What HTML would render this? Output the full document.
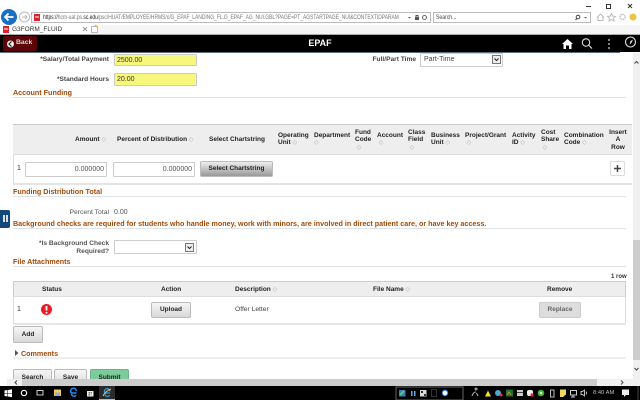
<!DOCTYPE html>
<html><head><meta charset="utf-8"><style>
html,body{margin:0;padding:0;background:#fff}
body{width:640px;height:400px;overflow:hidden;background:#fff;position:relative;font-family:"Liberation Sans",sans-serif;font-size:7px;color:#333;filter:blur(.25px)}
.a{position:absolute;white-space:nowrap;line-height:8px}
.b{font-weight:bold;font-size:6.6px}
.r{text-align:right}
.c{text-align:center}
.h{color:#a34a08;font-weight:bold;font-size:7.18px}
.l{position:absolute;height:1px;background:#e2e2e2;left:13px;width:613px}
.th{font-weight:bold;color:#222;line-height:7.4px;font-size:6.5px}
.s{color:#aaa;font-weight:normal;font-size:6px}
.btn{position:absolute;box-sizing:border-box;border:1px solid #bbb;border-radius:2px;background:linear-gradient(#f6f6f6,#d8d8d8);font-weight:bold;text-align:center;color:#222;font-size:6.5px}
.in{position:absolute;box-sizing:border-box;border:1px solid #ccc;border-radius:1px;background:#fff;line-height:11px}
svg{position:absolute;overflow:visible}
</style></head><body>

<!-- browser chrome -->
<div class="a" style="left:0;top:25px;width:640px;height:9px;background:#f5f5f5"></div>
<div class="a" style="left:0;top:34px;width:640px;height:1px;background:#aaa"></div>
<div class="a" style="left:0;top:25px;width:92px;height:9px;background:#fff"></div>
<svg style="left:0;top:0" width="640" height="35">
<circle cx="9" cy="17" r="8" fill="#1a6fc4"/>
<path d="M13.500 17H5.500M8.500 13.500L5 17l3.500 3.500" stroke="#fff" stroke-width="1.700" fill="none"/>
<circle cx="24.500" cy="17" r="5" fill="#fff" stroke="#bbb"/>
<path d="M22 17h5M25 15l2 2-2 2" stroke="#bbb" fill="none"/>
<rect x="31.500" y="12.500" width="399" height="10" fill="#fff" stroke="#bbb"/>
<rect x="34" y="14" width="6" height="7" fill="#d8232a"/>
<rect x="35" y="16.500" width="4" height="1" fill="#fff"/>
<rect x="433.500" y="12.500" width="157" height="10" fill="#fff" stroke="#bbb"/>
<rect x="3" y="26" width="6" height="7" fill="#d8232a"/>
<rect x="4" y="28.500" width="4" height="1" fill="#fff"/>
<path d="M83 27l4 4M87 27l-4 4" stroke="#999"/>
<rect x="91.500" y="26.500" width="6" height="6" fill="#fff" stroke="#bbb"/>
<path d="M95 25l2 2" stroke="#e8a33a"/>
<path d="M586 6.500h5" stroke="#333"/>
<rect x="606.500" y="4.500" width="4" height="4" fill="none" stroke="#333"/>
<path d="M628 4l4 4M632 4l-4 4" stroke="#333"/>
<rect x="415" y="17" width="4" height="3" fill="#555"/><path d="M416 17v-1.500h2V17" stroke="#555" fill="none"/>
<circle cx="424.500" cy="17.500" r="2" fill="none" stroke="#666"/>
<path d="M408 17h3l-1.500 1.500z" fill="#555"/>
<circle cx="578" cy="17" r="1.800" fill="none" stroke="#444"/><path d="M577 18.500l-1.500 1.500" stroke="#444"/>
<path d="M584 17h3l-1.500 1.500z" fill="#555"/>
<path d="M597 17.500l3.500-3.500 3.500 3.500M598 17v3.500h5V17" stroke="#bbb" fill="none"/>
<path d="M611.500 13.500l1.200 2.600 2.800.3-2 1.900.5 2.700-2.500-1.400-2.500 1.400.5-2.700-2-1.900 2.800-.3z" stroke="#bbb" fill="none"/>
<circle cx="622.500" cy="17" r="2.600" fill="none" stroke="#bbb" stroke-width="1.400" stroke-dasharray="1.300 .7"/>
<circle cx="633" cy="17" r="3.500" fill="#edc43e"/>
</svg>
<div class="a" style="left:43px;top:14px;font-size:6.5px;color:#777;transform:scaleX(.755);transform-origin:0 0"><span style="color:#222">https://</span>hcm-uat.ps.<span style="color:#222">sc.edu</span>/psc/HUAT/EMPLOYEE/HRMS/c/G_EPAF_LANDING_FL.G_EPAF_AG_NUI.GBL?PAGE=PT_AGSTARTPAGE_NUI&amp;CONTEXTIDPARAM</div>
<div class="a" style="left:436px;top:14px;font-size:6.5px;color:#444;transform:scaleX(.78);transform-origin:0 0">Search...</div>
<div class="a" style="left:12px;top:26px;font-size:6.5px;color:#333">G3FORM_FLUID</div>

<!-- nav bar -->
<div class="a" style="left:0;top:35px;width:640px;height:17px;background:#000"></div>
<div class="a" style="left:0;top:52px;width:620px;height:1px;background:#5b6f80"></div>
<div class="a" style="left:3px;top:36px;width:34px;height:15px;background:#5c0508;border-radius:2px"></div>
<div class="a" style="left:16px;top:39px;color:#ddd;font-size:6.8px;font-weight:bold">Back</div>
<svg style="left:0;top:35px" width="640" height="17">
<circle cx="10.500" cy="9" r="3.500" fill="#eee"/><path d="M11.500 6.500l-2.500 2.500 2.500 2.500" stroke="#222" stroke-width="1.200" fill="none"/>
<path d="M562 9l5.500-5 5.500 5h-1.500v5h-2.500v-3.500h-3v3.500h-2.500V9z" fill="#fff"/>
<circle cx="586" cy="7.500" r="3.700" fill="none" stroke="#ddd" stroke-width="1.100"/><path d="M589 10.500l3 3" stroke="#ddd" stroke-width="1.200"/>
<circle cx="609" cy="5" r=".9" fill="#ddd"/><circle cx="609" cy="9" r=".9" fill="#ddd"/><circle cx="609" cy="13" r=".9" fill="#ddd"/>
<circle cx="630.500" cy="7" r="5" fill="none" stroke="#ddd" stroke-width="1.100"/><path d="M633 4.500l-1.500 3.500-2 1.500 1-3.500z" fill="#ddd"/>
</svg>
<div class="a c" style="left:280px;top:38px;width:80px;color:#fff;font-size:9px;line-height:10px;font-weight:bold">EPAF</div>

<!-- top form -->
<div class="a b r" style="left:13px;top:56px;width:96px;color:#444">*Salary/Total Payment</div>
<div class="in" style="left:114px;top:54px;width:83px;height:12px;background:#f7f77e;padding-left:2px;color:#333">2500.00</div>
<div class="a b r" style="left:13px;top:76px;width:96px;color:#444">*Standard Hours</div>
<div class="in" style="left:114px;top:73px;width:83px;height:13px;background:#f7f77e;padding-left:2px;color:#333;line-height:12px">20.00</div>
<div class="a b r" style="left:360px;top:56px;width:56px;color:#444">Full/Part Time</div>
<div class="in" style="left:420px;top:53px;width:83px;height:14px;padding-left:3px;color:#444;line-height:12px">Part-Time</div>
<svg style="left:492px;top:55px" width="9" height="9"><rect x=".5" y=".5" width="8" height="8" fill="#eee" stroke="#777"/><path d="M2.500 3.500l2 2 2-2" stroke="#222" fill="none"/></svg>
<div class="a h" style="left:13px;top:89px">Account Funding</div>
<div class="l" style="top:97px"></div>

<!-- funding table -->
<div class="a" style="left:13px;top:124px;width:619px;height:31px;box-sizing:border-box;background:#eee;border-top:1px solid #ccc;border-bottom:1px solid #ddd"></div>
<div class="a" style="left:13px;top:155px;width:1px;height:29px;background:#ddd"></div>
<div class="a" style="left:13px;top:183px;width:619px;height:1.500px;background:#e4e4e4"></div>
<div class="a th" style="left:75px;top:136px">Amount <span class="s">◇</span></div>
<div class="a th" style="left:117px;top:136px">Percent of Distribution <span class="s">◇</span></div>
<div class="a th" style="left:209px;top:136px">Select Chartstring</div>
<div class="a th" style="left:278px;top:132px">Operating<br>Unit <span class="s">◇</span></div>
<div class="a th" style="left:314px;top:132px">Department<br><span class="s">◇</span></div>
<div class="a th" style="left:355px;top:129px">Fund<br>Code<br><span class="s">&nbsp;◇</span></div>
<div class="a th" style="left:377px;top:132px">Account<br><span class="s">&nbsp;◇</span></div>
<div class="a th" style="left:408px;top:129px">Class<br>Field<br><span class="s">&nbsp;◇</span></div>
<div class="a th" style="left:431px;top:132px">Business<br>Unit <span class="s">◇</span></div>
<div class="a th" style="left:465px;top:132px">Project/Grant<br><span class="s">&nbsp;◇</span></div>
<div class="a th" style="left:512px;top:132px">Activity<br>ID <span class="s">◇</span></div>
<div class="a th" style="left:541px;top:129px">Cost<br>Share<br><span class="s">&nbsp;◇</span></div>
<div class="a th" style="left:564px;top:132px">Combination<br>Code <span class="s">◇</span></div>
<div class="a th c" style="left:608px;top:129px;width:20px">Insert<br>A<br>Row</div>
<div class="a" style="left:17px;top:165px">1</div>
<div class="in r" style="left:25px;top:162px;width:82px;height:15px;line-height:14px;padding-right:2px;color:#555">0.000000</div>
<div class="in r" style="left:113px;top:162px;width:82px;height:15px;line-height:14px;padding-right:2px;color:#555">0.000000</div>
<div class="btn" style="left:200px;top:161px;width:73px;height:16px;line-height:14px;background:linear-gradient(#eee,#999)">Select Chartstring</div>
<div class="btn" style="left:610px;top:161px;width:15px;height:15px;background:#fff;border-color:#ddd"></div>
<svg style="left:613px;top:164px" width="9" height="9"><path d="M4.500 1v7M1 4.500h7" stroke="#444" stroke-width="1.500"/></svg>

<div class="a h" style="left:13px;top:188px">Funding Distribution Total</div>
<div class="l" style="top:196px"></div>

<div class="a r" style="left:13px;top:209px;width:96px;color:#555;font-size:6.8px">Percent Total</div>
<div class="a" style="left:114px;top:209px;color:#555">0.00</div>
<div class="a h" style="left:13px;top:220px">Background checks are required for students who handle money, work with minors, are involved in direct patient care, or have key access.</div>
<div class="l" style="top:228px"></div>

<div class="a b r" style="left:13px;top:240px;width:96px;color:#555;font-weight:bold;line-height:7.800px">*Is Background Check<br>Required?</div>
<div class="in" style="left:114px;top:240px;width:83px;height:14px"></div>
<svg style="left:185px;top:243px" width="9" height="9"><rect x=".5" y=".5" width="8" height="8" fill="#eee" stroke="#777"/><path d="M2.500 3.500l2 2 2-2" stroke="#222" fill="none"/></svg>
<div class="a h" style="left:13px;top:258px">File Attachments</div>
<div class="l" style="top:266px"></div>

<!-- attachments table -->
<div class="a" style="left:611px;top:273px;color:#333;font-size:6px;font-weight:bold">1 row</div>
<div class="a" style="left:13px;top:281px;width:613px;height:16px;box-sizing:border-box;background:#eee;border:1px solid #ccc;border-bottom:1px solid #ddd"></div>
<div class="a" style="left:13px;top:297px;width:613px;height:28px;box-sizing:border-box;border:1px solid #ddd;border-top:0;border-bottom:2px solid #e6e6e6"></div>
<div class="a th" style="left:42px;top:286px">Status</div>
<div class="a th" style="left:161px;top:286px">Action</div>
<div class="a th" style="left:235px;top:286px">Description <span class="s">◇</span></div>
<div class="a th" style="left:373px;top:286px">File Name <span class="s">◇</span></div>
<div class="a th" style="left:547px;top:286px">Remove</div>
<div class="a" style="left:17px;top:306px">1</div>
<svg style="left:41px;top:304px" width="12" height="12"><circle cx="5.500" cy="5.500" r="5.500" fill="#e81c24"/><path d="M5.500 2v4.500" stroke="#fff" stroke-width="1.800"/><circle cx="5.500" cy="8.700" r="1" fill="#fff"/></svg>
<div class="btn" style="left:151px;top:302px;width:40px;height:16px;line-height:14px">Upload</div>
<div class="a" style="left:235px;top:306px;color:#444;font-size:6.700px">Offer Letter</div>
<div class="btn" style="left:539px;top:302px;width:42px;height:16px;line-height:14px;background:#ddd;color:#666;border-color:#ccc">Replace</div>
<div class="btn" style="left:13px;top:326px;width:30px;height:17px;line-height:15px">Add</div>
<svg style="left:15px;top:350px" width="5" height="6"><path d="M0 0l3.500 3-3.500 3z" fill="#555"/></svg>
<div class="a h" style="left:21px;top:350px">Comments</div>
<div class="a" style="left:13px;top:357px;width:613px;height:2px;background:#eee"></div>
<div class="btn" style="left:13px;top:369px;width:39px;height:18px;line-height:15px">Search</div>
<div class="btn" style="left:54px;top:369px;width:33px;height:18px;line-height:15px">Save</div>
<div class="btn" style="left:90px;top:369px;width:39px;height:18px;line-height:15px;background:#7dcb9a;border-color:#6bb488">Submit</div>

<!-- scrollbars -->
<div class="a" style="left:633px;top:53px;width:7px;height:333px;background:#f0f0f0"></div>
<div class="a" style="left:633px;top:240px;width:7px;height:120px;background:#cdcdcd"></div>
<svg style="left:633px;top:53px" width="7" height="333"><path d="M1.500 10.500L3.500 8.500l2 2" stroke="#444" fill="none"/><path d="M1.500 315l2 2 2-2" stroke="#444" fill="none"/></svg>
<div class="a" style="left:7px;top:379px;width:626px;height:7px;background:#f0f0f0"></div>
<div class="a" style="left:22px;top:379px;width:575px;height:7px;background:#cdcdcd"></div>
<svg style="left:0;top:379px" width="640" height="7"><path d="M17 1.500l-2 2 2 2" stroke="#444" fill="none"/><path d="M621 1.500l2 2-2 2" stroke="#444" fill="none"/></svg>

<!-- left tab -->
<div class="a" style="left:0;top:210px;width:10px;height:18px;background:#13487a;border-radius:0 2px 2px 0"></div>
<div class="a" style="left:3px;top:215px;width:1.500px;height:7px;background:#ddd"></div>
<div class="a" style="left:6px;top:215px;width:1.500px;height:7px;background:#ddd"></div>

<!-- taskbar -->
<div class="a" style="left:0;top:386px;width:640px;height:14px;background:#000"></div>
<svg style="left:0;top:386px" width="640" height="14">
<path d="M4.500 4.500l3-.5v3h-3zM8 4l4-.7V7H8zM4.500 7.500h3v3l-3-.5zM8 7.500h4v3.700L8 10.500z" fill="#fff"/>
<circle cx="24" cy="7" r="2.700" fill="none" stroke="#fff" stroke-width="1.100"/>
<rect x="37" y="4.500" width="6" height="4.500" fill="none" stroke="#ccc"/>
<rect x="54" y="3.500" width="7" height="6.500" fill="#f2cd5c"/><rect x="55" y="6.500" width="5" height="3.500" fill="#7fb4e0"/>
<path d="M76.500 7h-5a2.800 2.800 0 1 1 4.800-2M71.500 8a2.700 2.700 0 0 0 4.700 1.300" stroke="#1e90ff" stroke-width="1.400" fill="none"/>
<rect x="87" y="5" width="6.500" height="5.500" fill="#eee"/><rect x="88.500" y="6" width="1.500" height="1.500" fill="#e44"/><rect x="90.500" y="6" width="1.500" height="1.500" fill="#4a4"/><rect x="88.500" y="8" width="1.500" height="1.500" fill="#38c"/><rect x="90.500" y="8" width="1.500" height="1.500" fill="#ec3"/>
<rect x="99" y="0" width="16" height="14" fill="#2b2b2b"/><rect x="99" y="13" width="16" height="1" fill="#f0a0a0"/>
<path d="M110 7h-5a2.700 2.700 0 1 1 4.800-1.500M105 8.500a2.700 2.700 0 0 0 4.800.8" stroke="#2a9de0" stroke-width="1.300" fill="none"/>
<path d="M103 10c2-4 5-6 8-7" stroke="#f0c040" fill="none"/>
<rect x="396" y="1" width="67" height="13" fill="none" stroke="#666"/>
<rect x="399" y="4" width="6.500" height="6.500" fill="#3a7cc0"/><path d="M400 9l4-4" stroke="#5c5" stroke-width="2"/>
<rect x="411" y="5" width="1.500" height="5" fill="#6ad"/><rect x="414" y="5" width="1.500" height="5" fill="#6ad"/>
<rect x="420" y="4" width="6.500" height="6.500" fill="#ddd"/><rect x="421" y="5" width="2" height="2" fill="#333"/><rect x="424" y="8" width="2" height="2" fill="#333"/>
<rect x="431.500" y="3.500" width="5" height="7" fill="none" stroke="#333"/>
<circle cx="445" cy="7" r="2.700" fill="#fff" stroke="#38f"/>
<path d="M472 10c1-3 2-4 4-4M476 4a1 1 0 1 1 .1 0M478 10l-1.500-3" stroke="#bbb" fill="none"/>
<path d="M485 10.500l3-6 3 6z" fill="#f5e11e"/>
<circle cx="498" cy="7" r="3" fill="#4da6d8"/><circle cx="501" cy="9" r="1.500" fill="#e33"/>
<rect x="506" y="3.500" width="7" height="7" fill="#173"/><path d="M507 9l2-3 2 3" stroke="#e83" fill="none"/>
<rect x="517" y="4" width="6" height="6" fill="#ccc"/><rect x="517" y="6" width="6" height="1" fill="#444"/>
<rect x="527" y="4" width="6" height="6" rx="2" fill="#eee"/><circle cx="532" cy="9" r="1.600" fill="#e22"/>
<circle cx="541" cy="7" r="3.300" fill="#4caf32"/><circle cx="541" cy="7" r="1.300" fill="#cfc"/>
<rect x="550.500" y="4" width="3.500" height="7" fill="none" stroke="#bbb"/>
<path d="M560 3.500h6v5l-3 2.500h-3z" fill="#f0d860"/>
<rect x="570.500" y="4.500" width="6" height="4.500" fill="none" stroke="#ccc"/><path d="M573 9v2M571 11h4" stroke="#ccc"/>
<path d="M581 5.500h1.500l2-1.500v6l-2-1.500H581z" fill="none" stroke="#bbb"/><path d="M586 5.500c.7 1 .7 2 0 3" stroke="#bbb" fill="none"/>
<rect x="622" y="3.500" width="7" height="5.500" fill="#eee"/><path d="M624 9v2l2-2" fill="#eee"/>
<rect x="637.500" y="0" width="1" height="14" fill="#444"/>
</svg>
<div class="a" style="left:593px;top:389px;color:#bbb;font-size:5.800px">8:40 AM</div>
</body></html>
